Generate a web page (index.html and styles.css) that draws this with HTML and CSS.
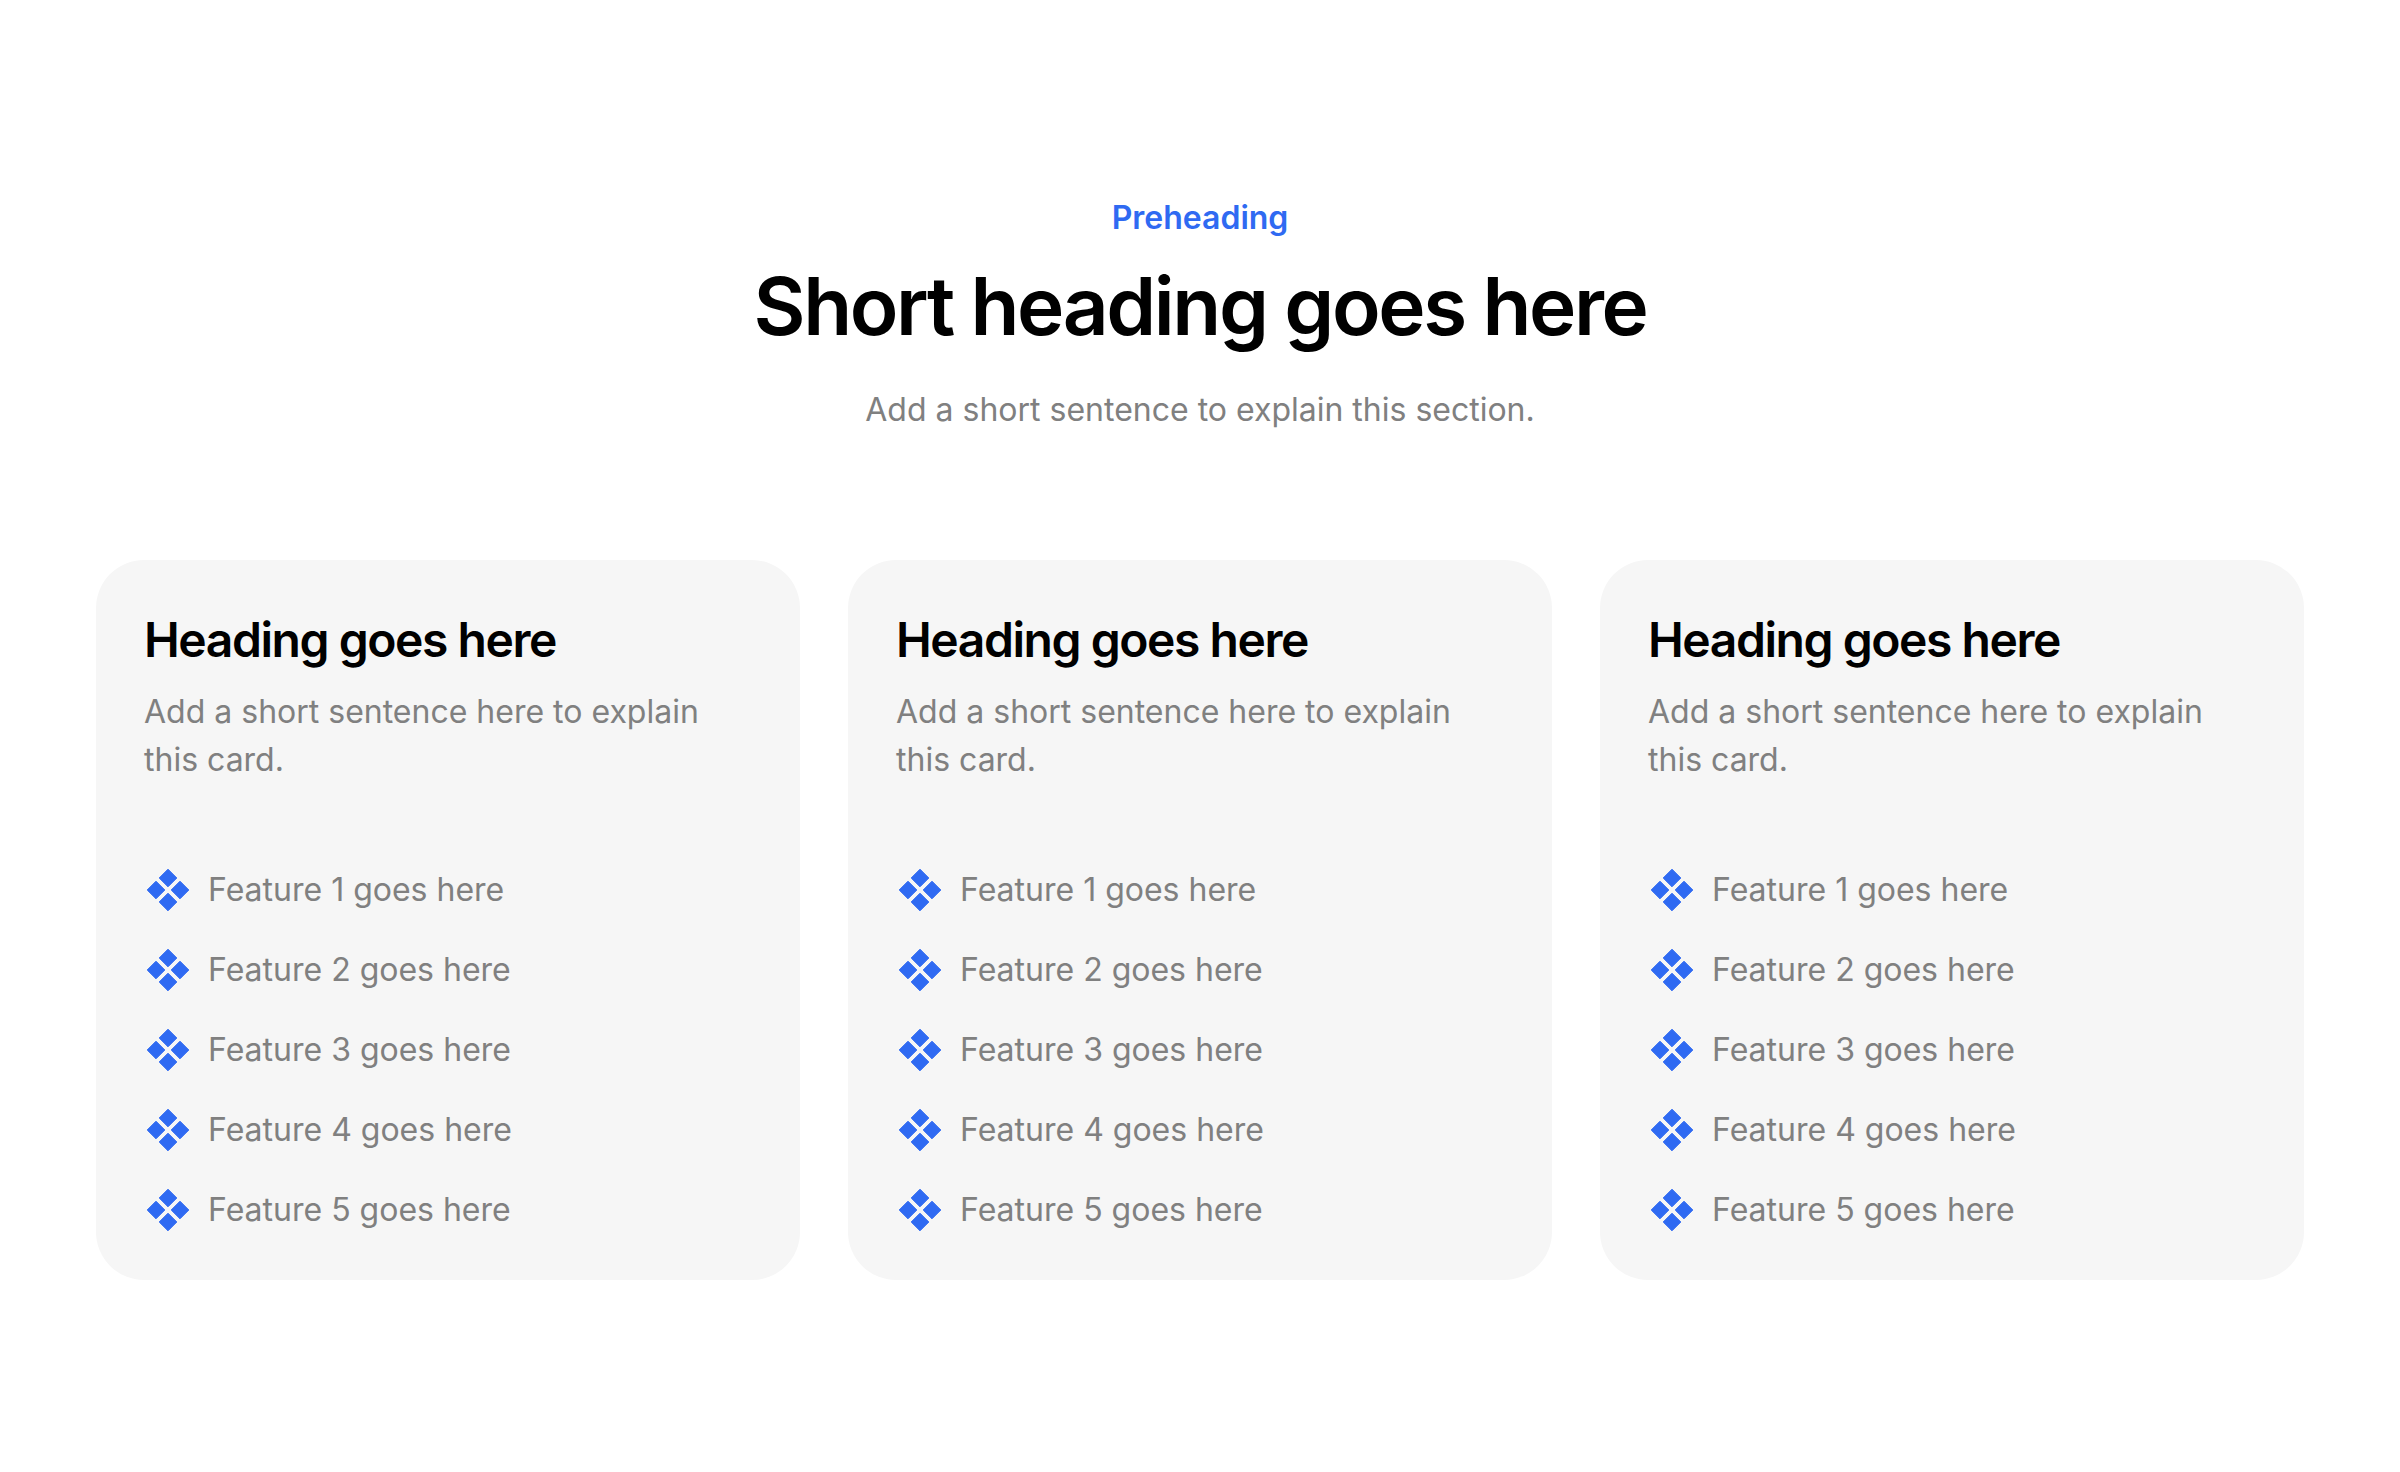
FILE: index.html
```html
<!DOCTYPE html>
<html lang="en">
  <head>
    <meta charset="UTF-8" />
    <title>Pricing cards</title>
    <link rel="stylesheet" href="styles.css">
  </head>
  <body>
    <svg class="defs" width="0" height="0">
      <symbol id="diamonds" viewBox="0 0 48 48">
        <path d="M24 3.2L32.800 12L24 20.800L15.200 12Z" />
        <path d="M12 15.200L20.800 24L12 32.800L3.200 24Z" />
        <path d="M36 15.200L44.800 24L36 32.800L27.200 24Z" />
        <path d="M24 27.200L32.800 36L24 44.800L15.200 36Z" />
      </symbol>
    </svg>
    <section class="page">
      <header class="intro">
        <p class="preheading">Preheading</p>
        <h1 class="title">Short heading goes here</h1>
        <p class="subtitle">Add a short sentence to explain this section.</p>
      </header>
      <div class="cards">
        <article class="card">
          <h2 class="card-title">Heading goes here</h2>
          <p class="card-text">Add a short sentence here to explain this card.</p>
          <ul class="features">
            <li class="feature"><svg class="icon"><use href="#diamonds" /></svg>Feature 1 goes here</li>
            <li class="feature"><svg class="icon"><use href="#diamonds" /></svg>Feature 2 goes here</li>
            <li class="feature"><svg class="icon"><use href="#diamonds" /></svg>Feature 3 goes here</li>
            <li class="feature"><svg class="icon"><use href="#diamonds" /></svg>Feature 4 goes here</li>
            <li class="feature"><svg class="icon"><use href="#diamonds" /></svg>Feature 5 goes here</li>
          </ul>
        </article>
        <article class="card">
          <h2 class="card-title">Heading goes here</h2>
          <p class="card-text">Add a short sentence here to explain this card.</p>
          <ul class="features">
            <li class="feature"><svg class="icon"><use href="#diamonds" /></svg>Feature 1 goes here</li>
            <li class="feature"><svg class="icon"><use href="#diamonds" /></svg>Feature 2 goes here</li>
            <li class="feature"><svg class="icon"><use href="#diamonds" /></svg>Feature 3 goes here</li>
            <li class="feature"><svg class="icon"><use href="#diamonds" /></svg>Feature 4 goes here</li>
            <li class="feature"><svg class="icon"><use href="#diamonds" /></svg>Feature 5 goes here</li>
          </ul>
        </article>
        <article class="card">
          <h2 class="card-title">Heading goes here</h2>
          <p class="card-text">Add a short sentence here to explain this card.</p>
          <ul class="features">
            <li class="feature"><svg class="icon"><use href="#diamonds" /></svg>Feature 1 goes here</li>
            <li class="feature"><svg class="icon"><use href="#diamonds" /></svg>Feature 2 goes here</li>
            <li class="feature"><svg class="icon"><use href="#diamonds" /></svg>Feature 3 goes here</li>
            <li class="feature"><svg class="icon"><use href="#diamonds" /></svg>Feature 4 goes here</li>
            <li class="feature"><svg class="icon"><use href="#diamonds" /></svg>Feature 5 goes here</li>
          </ul>
        </article>
      </div>
    </section>
  </body>
</html>
```

FILE: styles.css
```css
* {
  margin: 0;
  padding: 0;
  box-sizing: border-box;
}
body {
  background-color: #fff;
  font-family: Inter, "Liberation Sans", sans-serif;
  color: #808080;
}
.defs {
  position: absolute;
}
.page {
  padding: 194px 96px 0;
}
.intro {
  display: flex;
  flex-direction: column;
  align-items: center;
  text-align: center;
}
.preheading {
  font-size: 32px;
  line-height: 48px;
  font-weight: 600;
  color: #2f6af2;
}
.title {
  margin-top: 16px;
  font-size: 80px;
  line-height: 96px;
  font-weight: 600;
  letter-spacing: -0.03em;
  color: #000;
}
.subtitle {
  margin-top: 32px;
  font-size: 32px;
  line-height: 48px;
}
.cards {
  display: grid;
  grid-template-columns: repeat(3, 704px);
  gap: 48px;
  margin-top: 126px;
}
.card {
  height: 720px;
  padding: 48px;
  background-color: #f6f6f6;
  border-radius: 48px;
}
.card-title {
  font-size: 48px;
  line-height: 64px;
  font-weight: 600;
  letter-spacing: -0.03em;
  color: #000;
}
.card-text {
  margin-top: 16px;
  font-size: 32px;
  line-height: 48px;
}
.features {
  list-style: none;
  display: flex;
  flex-direction: column;
  gap: 32px;
  margin-top: 82px;
}
.feature {
  display: flex;
  align-items: center;
  gap: 16px;
  font-size: 32px;
  line-height: 48px;
}
.icon {
  width: 48px;
  height: 48px;
  flex-shrink: 0;
  fill: #2f6af2;
  stroke: #2f6af2;
  stroke-width: 1;
  stroke-linejoin: round;
}
```
